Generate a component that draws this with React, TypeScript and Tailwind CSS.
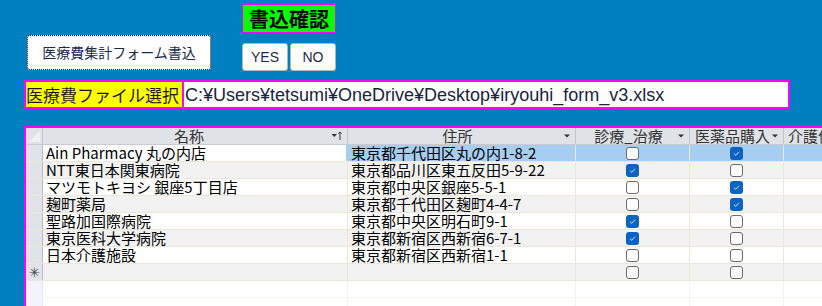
import React from "react";

type Row = { name: string; address: string; care: boolean; medicine: boolean };

const rows: Row[] = [
  { name: "Ain Pharmacy 丸の内店", address: "東京都千代田区丸の内1-8-2", care: false, medicine: true },
  { name: "NTT東日本関東病院", address: "東京都品川区東五反田5-9-22", care: true, medicine: false },
  { name: "マツモトキヨシ 銀座5丁目店", address: "東京都中央区銀座5-5-1", care: false, medicine: true },
  { name: "麹町薬局", address: "東京都千代田区麹町4-4-7", care: false, medicine: true },
  { name: "聖路加国際病院", address: "東京都中央区明石町9-1", care: true, medicine: false },
  { name: "東京医科大学病院", address: "東京都新宿区西新宿6-7-1", care: true, medicine: false },
  { name: "日本介護施設", address: "東京都新宿区西新宿1-1", care: false, medicine: false },
];

const font = { fontFamily: '"Noto Sans CJK JP", "Liberation Sans", sans-serif' };

function DropArrow() {
  return (
    <svg width="8" height="6" viewBox="0 0 8 6" className="shrink-0">
      <path d="M1 1.5 L7 1.5 L4 4.5 Z" fill="#333" />
    </svg>
  );
}

function SortArrow() {
  return (
    <svg width="12" height="10" viewBox="0 0 12 10" className="shrink-0">
      <path d="M0.5 3 L6 3 L3.25 6 Z" fill="#333" />
      <path d="M9 1 L9 9 M7.5 2.5 L9 1 L10.5 2.5" stroke="#333" strokeWidth="1" fill="none" />
    </svg>
  );
}

function Check({ on }: { on: boolean }) {
  if (on) {
    return (
      <span className="inline-flex w-[13px] h-[13px] rounded-[3px] bg-[#0b63c4] items-center justify-center">
        <svg width="9" height="9" viewBox="0 0 9 9">
          <path d="M2 4.6 L3.8 6.3 L7 2.8" stroke="#cfe2f7" strokeWidth="1" fill="none" />
        </svg>
      </span>
    );
  }
  return <span className="inline-block w-[13px] h-[13px] rounded-[3px] border border-[#6b6b6b] bg-white" />;
}

function HeaderCell({ label, w, sort }: { label: string; w: string; sort?: boolean }) {
  return (
    <div className={`${w} shrink-0 h-full flex items-center border-r border-[#c2c6cc] pl-1 pr-1`}>
      <span className="flex-1 text-center text-[#333] text-[15px] leading-[16px] whitespace-nowrap">{label}</span>
      {sort ? <SortArrow /> : <DropArrow />}
    </div>
  );
}

export default function App() {
  return (
    <div className="w-[822px] h-[306px] bg-[#0080c0] overflow-hidden relative" style={font}>
      <div className="flex h-[76px]">
        <div className="ml-[27px] mt-[35px]">
          <button className="w-[184px] h-[35px] bg-white border border-dotted border-black rounded-[3px] text-[14px] text-[#1e2b48]">
            医療費集計フォーム書込
          </button>
        </div>
        <div className="ml-[31px] mt-[4px] flex flex-col">
          <div className="w-[94px] h-[29px] bg-[#00ff00] border border-[#ff00ff] flex items-center justify-center text-[20px] font-bold text-black leading-none">
            書込確認
          </div>
          <div className="flex gap-[2px] mt-[10px]">
            <button className="w-[46px] h-[28px] bg-white border border-[#b5b5b5] rounded-[3px] text-[14px] text-[#1e2b48]" style={{ fontFamily: '"Liberation Sans", sans-serif' }}>
              YES
            </button>
            <button className="w-[46px] h-[28px] bg-white border border-[#b5b5b5] rounded-[3px] text-[14px] text-[#1e2b48]" style={{ fontFamily: '"Liberation Sans", sans-serif' }}>
              NO
            </button>
          </div>
        </div>
      </div>

      <div className="flex ml-[24px] mt-[4px] h-[29px] w-[766px] border-2 border-[#ff00ff]">
        <div className="w-[158px] h-full bg-[#ffff00] border-r-2 border-[#ff00ff] flex items-center text-[17px] text-[#1a1a1a] whitespace-nowrap leading-[20px]">
          医療費ファイル選択
        </div>
        <div className="flex-1 bg-white flex items-center pl-[1px] text-[18px] text-[#1a2440] whitespace-nowrap leading-[20px]" style={{ fontFamily: '"Liberation Sans", sans-serif' }}>
          C:¥Users¥tetsumi¥OneDrive¥Desktop¥iryouhi_form_v3.xlsx
        </div>
      </div>

      <div className="ml-[24px] mt-[17px] border-l-2 border-t-2 border-[#ff00ff] bg-white h-[200px] overflow-hidden">
        <div className="flex h-[17px] bg-[#dfe2e7] border-b border-[#c8ccd2]">
          <div className="w-[17px] shrink-0 h-full border-r border-[#c2c6cc] relative overflow-hidden">
            <svg width="17" height="16" viewBox="0 0 17 16" className="absolute left-0 top-0">
              <path d="M3 14 L14 3 L14 14 Z" fill="#eef0f3" />
            </svg>
          </div>
          <HeaderCell label="名称" w="w-[305px]" sort />
          <HeaderCell label="住所" w="w-[228px]" />
          <HeaderCell label="診療_治療" w="w-[114px]" />
          <HeaderCell label="医薬品購入" w="w-[94px]" />
          <div className="w-[60px] shrink-0 h-full flex items-center pl-[4px] text-[15px] leading-[16px] text-[#333] whitespace-nowrap">
            介護保険
          </div>
        </div>

        {rows.map((r, i) => {
          const alt = i % 2 === 1;
          const bg = alt ? "bg-[#f2f2f2]" : "bg-white";
          const sel = i === 0;
          return (
            <div key={i} className={`flex h-[17px] border-b border-[#ebe8d8] text-[15px] text-black leading-[16px] ${bg}`}>
              <div className="w-[17px] shrink-0 h-full bg-[#e1e3e8] border-r border-[#b8bcc4]" />
              <div className={`w-[305px] shrink-0 h-full flex items-center pl-[3px] border-r whitespace-nowrap ${sel ? "bg-white border-[#a7cdf0] border-r-2" : "border-[#ebe8d8]"}`}>
                {r.name}
              </div>
              <div className={`w-[228px] shrink-0 h-full flex items-center pl-[3px] border-r border-[#ebe8d8] whitespace-nowrap ${sel ? "bg-[#a7cdf0]" : ""}`}>
                {r.address}
              </div>
              <div className={`w-[114px] shrink-0 h-full flex items-center justify-center border-r border-[#ebe8d8] ${sel ? "bg-[#a7cdf0]" : ""}`}>
                <Check on={r.care} />
              </div>
              <div className={`w-[94px] shrink-0 h-full flex items-center justify-center border-r border-[#ebe8d8] ${sel ? "bg-[#a7cdf0]" : ""}`}>
                <Check on={r.medicine} />
              </div>
              <div className={`flex-1 h-full ${sel ? "bg-[#a7cdf0]" : ""}`} />
            </div>
          );
        })}

        <div className="flex h-[17px] border-b border-[#ebe8d8] bg-[#f2f2f2]">
          <div className="w-[17px] shrink-0 h-full bg-[#e1e3e8] border-r border-[#b8bcc4] flex items-center justify-center text-[13px] text-[#444] leading-[16px]">
            ✳
          </div>
          <div className="w-[305px] shrink-0 h-full border-r border-[#ebe8d8]" />
          <div className="w-[228px] shrink-0 h-full border-r border-[#ebe8d8]" />
          <div className="w-[114px] shrink-0 h-full flex items-center justify-center border-r border-[#ebe8d8]">
            <Check on={false} />
          </div>
          <div className="w-[94px] shrink-0 h-full flex items-center justify-center border-r border-[#ebe8d8]">
            <Check on={false} />
          </div>
          <div className="flex-1" />
        </div>

        {[0, 1].map((k) => (
          <div key={k} className="flex h-[17px] border-b border-[#f4f2ea] bg-white">
            <div className="w-[17px] shrink-0 h-full bg-[#f2f3fb] border-r border-[#e4e6ee]" />
            <div className="w-[305px] shrink-0 h-full border-r border-[#f4f2ea]" />
            <div className="w-[228px] shrink-0 h-full border-r border-[#f4f2ea]" />
            <div className="w-[114px] shrink-0 h-full border-r border-[#f4f2ea]" />
            <div className="w-[94px] shrink-0 h-full border-r border-[#f4f2ea]" />
            <div className="flex-1" />
          </div>
        ))}
      </div>
    </div>
  );
}
